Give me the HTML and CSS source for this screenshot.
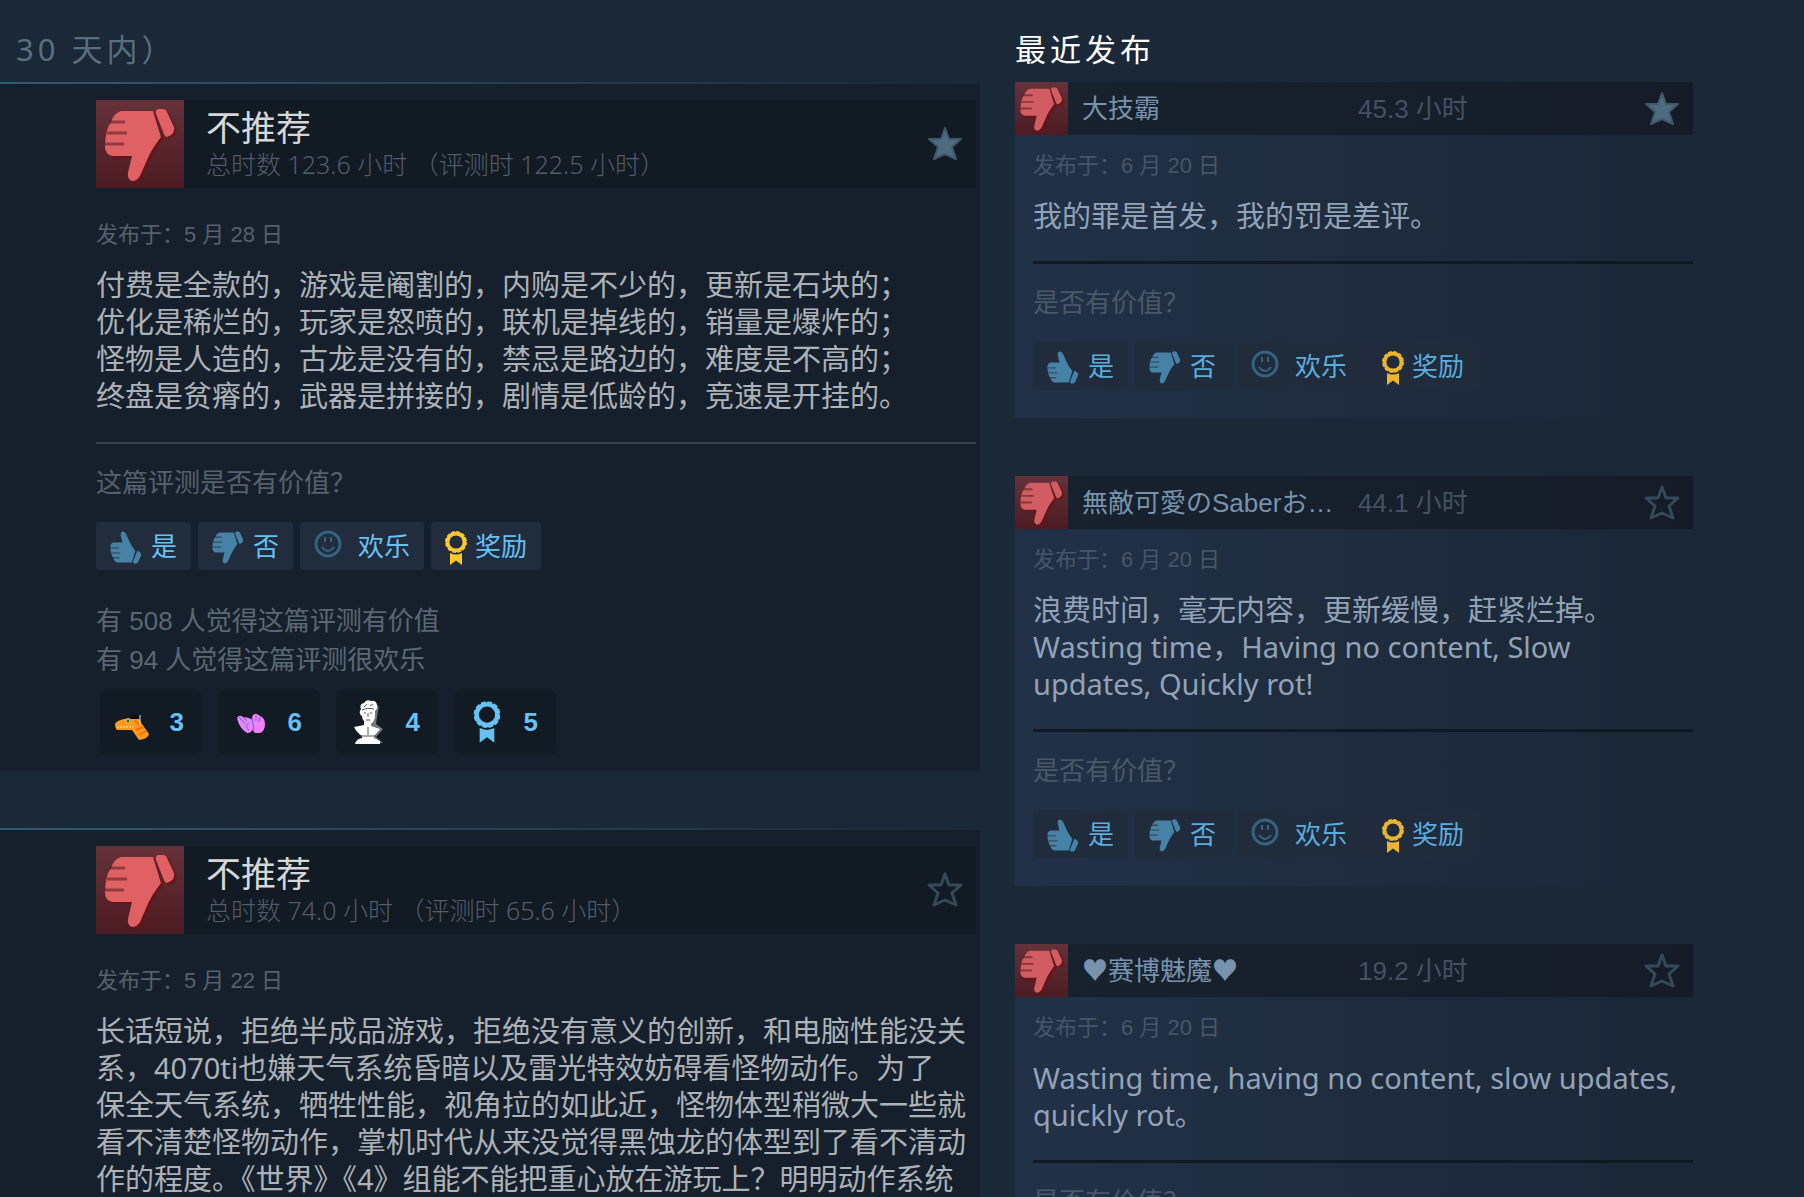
FILE: index.html
```
<!DOCTYPE html>
<html lang="zh-CN">
<head>
    <meta charset="UTF-8">
    <meta name="viewport" content="width=device-width, initial-scale=1.0">
    <title>用户评测</title>
    <link rel="stylesheet" href="styles.css">
</head>
<body>
    <!-- Icon Sprite -->
    <svg class="sprite" aria-hidden="true">
        <symbol id="thumb" viewBox="0 0 88 88">
            <path d="M25 11H57L65 37Q55 50 51 60L44 76Q41 81 36 81Q31 79 32 73L36 56H16Q9 54 9 47Q9 30 15 22Q18 13 25 11Z"/>
            <path d="M62 9H67Q70 9 71 12L78 27Q79 32 75 35L71 37Q69 37 68 34L60 14Q59 10 62 9Z"/>
            <path d="M14 22H29M11 33H31M9 44H28" stroke="#300c14" stroke-opacity="0.45" stroke-width="3"/>
        </symbol>
        <symbol id="thumb-small" viewBox="8 8 72 74">
            <use href="#thumb" width="88" height="88"/>
        </symbol>
        <symbol id="star" viewBox="0 0 36 36">
            <path d="M18 2L22 13L34 13L25 21L29 33L18 28L7 33L11 21L2 13L14 13Z" stroke-linejoin="round"/>
        </symbol>
        <symbol id="face" viewBox="0 0 28 28">
            <circle cx="14" cy="14" r="12" fill="none" stroke="currentColor" stroke-width="3"/>
            <path d="M11 7V12M17 7V12M8 17Q14 25 20 17" fill="none" stroke="currentColor" stroke-width="2"/>
        </symbol>
        <symbol id="ribbon" viewBox="0 0 22 34">
            <circle cx="11" cy="11" r="8.4" fill="none" stroke="currentColor" stroke-width="3.6"/>
            <circle cx="11" cy="11" r="10" fill="none" stroke="currentColor" stroke-width="2" stroke-dasharray="3.8 1.436"/>
            <path d="M5 22Q11 25 17 22V34L11 29.5L5 34Z" fill="currentColor"/>
        </symbol>
    </svg>

    <main class="page">
        <!-- Most Helpful Column -->
        <section class="helpful">
            <h2 class="heading muted">30 天内）</h2>

            <article class="review">
                <header class="review-head">
                    <span class="thumb-box"><svg><use href="#thumb"/></svg></span>
                    <div class="verdict">
                        <h3>不推荐</h3>
                        <p>总时数 123.6 小时 （评测时 122.5 小时）</p>
                    </div>
                    <svg class="star filled"><use href="#star"/></svg>
                </header>
                <p class="posted">发布于：5 月 28 日</p>
                <p class="content">付费是全款的，游戏是阉割的，内购是不少的，更新是石块的；<br>优化是稀烂的，玩家是怒喷的，联机是掉线的，销量是爆炸的；<br>怪物是人造的，古龙是没有的，禁忌是路边的，难度是不高的；<br>终盘是贫瘠的，武器是拼接的，剧情是低龄的，竞速是开挂的。</p>
                <p class="question">这篇评测是否有价值？</p>
                <div class="votes">
                    <button class="vote"><svg class="up"><use href="#thumb-small"/></svg>是</button>
                    <button class="vote"><svg><use href="#thumb-small"/></svg>否</button>
                    <button class="vote funny"><svg><use href="#face"/></svg>欢乐</button>
                    <button class="vote award"><svg><use href="#ribbon"/></svg>奖励</button>
                </div>
                <p class="stats">有 508 人觉得这篇评测有价值<br>有 94 人觉得这篇评测很欢乐</p>
                <div class="awards">
                    <button class="pill">
                        <svg viewBox="0 0 44 44">
                            <path d="M19 19L21 14L28 15L29 20Z" fill="#0a0d10"/>
                            <path d="M4 24Q5 21 13 19L28 19L31 24L38 34Q37 39 28 40L21 30L6 30Q4 28 4 24Z" fill="#fb9a1c"/>
                            <path d="M25 30L32 27M28 35L35 31M24 21L29 25" stroke="#f0700e" stroke-width="2"/>
                            <path d="M6 27H22" stroke="#ffe9bd" stroke-dasharray="2 1"/>
                            <circle cx="17" cy="21" r="3" fill="#c7b24a"/>
                            <circle cx="17" cy="21" r="1" fill="#27301c"/>
                            <path d="M29 15V25" stroke="#e9e3d8"/>
                        </svg>3
                    </button>
                    <button class="pill">
                        <svg viewBox="0 0 44 44">
                            <path d="M8 18Q10 14 14 17Q19 17 24 20L24 28Q23 33 18 33Q10 28 8 18Z" fill="#e884ff"/>
                            <path d="M23 18Q24 13 28 14L31 16Q36 18 36 24Q36 31 31 33H26Q22 29 22 24Z" fill="#ee82fb"/>
                            <path d="M10 17L16 24M14 17L18 21M20 23Q15 26 20 30M23 18L25 30M27 15V21M31 17L30 22" fill="none" stroke="#6b62d8" stroke-width="1"/>
                        </svg>6
                    </button>
                    <button class="pill">
                        <svg viewBox="0 0 44 44">
                            <path d="M27 4Q34 5 31 11L29 24L36 29L29 37L36 43H22V4Z" fill="#777"/>
                            <path d="M14 9Q12 4 17 3Q19 -1 24 1Q29 0 30 5Q31 9 28 11V17Q27 22 24 24V26L33 29Q30 33 27 36V38L33 41V44H8Q9 39 15 38V36Q10 33 7 27L17 25V21Q15 19 15 16Q12 15 13 11Z" fill="#fff"/>
                            <path d="M15 10Q20 7 27 9M17 13H19M23 13H25M21 13V17M19 20H23M17 7L20 4M23 6L26 4M21 27V35M13 36H29" fill="none" stroke="#555" stroke-width="1"/>
                        </svg>4
                    </button>
                    <button class="pill"><svg viewBox="-7 -1 36 36"><use href="#ribbon" width="22" height="34"/></svg>5</button>
                </div>
            </article>

            <article class="review">
                <header class="review-head">
                    <span class="thumb-box"><svg><use href="#thumb"/></svg></span>
                    <div class="verdict">
                        <h3>不推荐</h3>
                        <p>总时数 74.0 小时 （评测时 65.6 小时）</p>
                    </div>
                    <svg class="star"><use href="#star"/></svg>
                </header>
                <p class="posted">发布于：5 月 22 日</p>
                <p class="content">长话短说，拒绝半成品游戏，拒绝没有意义的创新，和电脑性能没关系，4070ti也嫌天气系统昏暗以及雷光特效妨碍看怪物动作。为了<br>保全天气系统，牺牲性能，视角拉的如此近，怪物体型稍微大一些就看不清楚怪物动作，掌机时代从来没觉得黑蚀龙的体型到了看不清动作的程度。《世界》《4》组能不能把重心放在游玩上？明明动作系统</p>
            </article>
        </section>

        <!-- Recently Posted Column -->
        <section class="recent">
            <h2 class="heading">最近发布</h2>

            <article class="short">
                <header class="short-head">
                    <span class="thumb-box small"><svg><use href="#thumb"/></svg></span>
                    <a class="name" href="#">大技霸</a>
                    <span class="hours">45.3 小时</span>
                    <svg class="star filled"><use href="#star"/></svg>
                </header>
                <div class="short-body">
                    <p class="posted">发布于：6 月 20 日</p>
                    <p class="content">我的罪是首发，我的罚是差评。</p>
                    <p class="question">是否有价值？</p>
                    <div class="votes">
                        <button class="vote"><svg class="up"><use href="#thumb-small"/></svg>是</button>
                        <button class="vote"><svg><use href="#thumb-small"/></svg>否</button>
                        <button class="vote funny"><svg><use href="#face"/></svg>欢乐</button>
                        <button class="vote award"><svg><use href="#ribbon"/></svg>奖励</button>
                    </div>
                </div>
            </article>

            <article class="short">
                <header class="short-head">
                    <span class="thumb-box small"><svg><use href="#thumb"/></svg></span>
                    <a class="name" href="#">無敵可愛のSaberお…</a>
                    <span class="hours">44.1 小时</span>
                    <svg class="star"><use href="#star"/></svg>
                </header>
                <div class="short-body">
                    <p class="posted">发布于：6 月 20 日</p>
                    <p class="content">浪费时间，毫无内容，更新缓慢，赶紧烂掉。<br>Wasting time，Having no content, Slow updates, Quickly rot!</p>
                    <p class="question">是否有价值？</p>
                    <div class="votes">
                        <button class="vote"><svg class="up"><use href="#thumb-small"/></svg>是</button>
                        <button class="vote"><svg><use href="#thumb-small"/></svg>否</button>
                        <button class="vote funny"><svg><use href="#face"/></svg>欢乐</button>
                        <button class="vote award"><svg><use href="#ribbon"/></svg>奖励</button>
                    </div>
                </div>
            </article>

            <article class="short">
                <header class="short-head">
                    <span class="thumb-box small"><svg><use href="#thumb"/></svg></span>
                    <a class="name" href="#"><span class="heart">♥</span>赛博魅魔<span class="heart">♥</span></a>
                    <span class="hours">19.2 小时</span>
                    <svg class="star"><use href="#star"/></svg>
                </header>
                <div class="short-body">
                    <p class="posted">发布于：6 月 20 日</p>
                    <p class="content">Wasting time, having no content, slow updates, quickly rot。</p>
                    <p class="question">是否有价值？</p>
                </div>
            </article>
        </section>
    </main>
</body>
</html>
```
FILE: styles.css
```
/* General Styles */
* {
    box-sizing: border-box;
}

body {
    margin: 0;
    background: #1b2838;
    color: #acb2b8;
    font-family: "Liberation Sans", "Noto Sans CJK SC", sans-serif;
    font-size: 26px;
}

h2,
h3,
p {
    margin: 0;
    font-weight: 400;
}

button {
    border: none;
    font: inherit;
    cursor: pointer;
}

.sprite {
    position: absolute;
    width: 0;
    height: 0;
}

.page {
    display: grid;
    grid-template-columns: minmax(0, 980fr) minmax(0, 678fr);
    column-gap: 35px;
    height: 100vh;
    padding-right: 111px;
    overflow: hidden;
}

.heading {
    height: 82px;
    padding-top: 26px;
    font-family: "Noto Sans", "Noto Sans CJK SC", sans-serif;
    font-size: 31px;
    line-height: 46px;
    letter-spacing: 4px;
    color: #fff;
}

.heading.muted {
    padding-left: 16px;
    color: #56707f;
}

/* Large Reviews */
.review {
    margin-bottom: 57px;
    padding: 16px 4px 16px 96px;
    border-top: 2px solid;
    border-image: linear-gradient(to right, #2f5a75, #1b2838) 1;
    background: #16202c;
}

.review-head {
    display: flex;
    align-items: center;
    background: #121a23;
}

.thumb-box {
    flex: none;
    width: 88px;
    height: 88px;
    background: linear-gradient(#663239, #4d1b22);
}

.thumb-box svg {
    display: block;
    width: 100%;
    height: 100%;
    fill: #e06163;
    filter: drop-shadow(2px 2px 1px #651418);
}

.verdict {
    flex: 1;
    padding-left: 22px;
    font-family: "Noto Sans", "Noto Sans CJK SC", sans-serif;
}

.verdict h3 {
    font-size: 35px;
    line-height: 42px;
    color: #d6d7d8;
}

.verdict p {
    padding-bottom: 2px;
    font-size: 25px;
    font-weight: 300;
    line-height: 31px;
    color: #525d6b;
}

.star {
    flex: none;
    width: 36px;
    height: 36px;
    margin-right: 13px;
    fill: none;
    stroke: #34495a;
    stroke-width: 3;
}

.star.filled {
    fill: #4f6b80;
    stroke: #3f586a;
    stroke-width: 2;
}

.posted {
    font-size: 22px;
    line-height: 28px;
    color: #56606e;
}

.content {
    font-family: "Noto Sans", "Noto Sans CJK SC", sans-serif;
    font-size: 29px;
    line-height: 37px;
}

.question {
    line-height: 38px;
    color: #56606e;
}

.review .posted {
    margin: 33px 0 17px;
}

.review .question {
    margin-top: 28px;
    padding-top: 20px;
    border-top: 2px solid #36424f;
}

/* Vote Buttons */
.votes {
    display: flex;
    gap: 7px;
    margin-top: 20px;
}

.vote {
    display: flex;
    align-items: center;
    gap: 9px;
    height: 48px;
    padding: 0 14px 4px;
    border-radius: 4px;
    background: #212c3d;
    color: #67c1f5;
}

.vote svg {
    width: 32px;
    height: 33px;
    margin-top: 7px;
    fill: #4582a5;
}

.vote .up {
    transform: scaleY(-1);
}

.vote.funny {
    gap: 16px;
}

.vote.funny svg {
    width: 28px;
    height: 28px;
    margin-top: 0;
    color: #35637f;
}

.vote.award {
    gap: 8px;
}

.vote.award svg {
    width: 22px;
    height: 34px;
    margin-top: 7px;
    color: #ffc82c;
}

.stats {
    margin-top: 32px;
    line-height: 39px;
    color: #5b6773;
}

/* Award Pills */
.awards {
    display: flex;
    gap: 16px;
    margin: 9px 4px 0;
}

.pill {
    display: flex;
    align-items: center;
    justify-content: space-between;
    width: 102px;
    height: 66px;
    padding: 0 18px 0 11px;
    border-radius: 8px;
    background: #121a23;
    color: #67c1f5;
    font-weight: 700;
}

.pill svg {
    width: 44px;
    height: 44px;
}

/* Short Reviews */
.short {
    margin-bottom: 58px;
    background: linear-gradient(to right, #213148, #1f2d3f 40%, #1b2838 90%);
}

.short-head {
    display: flex;
    align-items: center;
    background: linear-gradient(to right, #18222f, #151c28);
}

.thumb-box.small {
    width: 53px;
    height: 53px;
}

.small svg {
    fill: #d15c61;
}

.name {
    flex: 0 0 276px;
    padding: 0 0 4px 14px;
    overflow: hidden;
    white-space: nowrap;
    text-decoration: none;
    color: #7893ad;
}

.heart {
    font-family: "Noto Sans CJK JP", sans-serif;
}

.hours {
    flex: 1;
    padding: 0 0 4px 14px;
    color: #435163;
}

.short-body {
    padding: 17px 0 28px 18px;
}

.short .content {
    padding: 17px 12px 27px 0;
    color: #92a3b8;
}

.short .posted {
    color: #485567;
}

.short .question {
    padding-top: 20px;
    border-top: 3px solid #111923;
    color: #4b5868;
}

.short .vote {
    background: #202b3b;
    color: #5aaddd;
}

.short .award svg {
    color: #ebb62e;
}
```
